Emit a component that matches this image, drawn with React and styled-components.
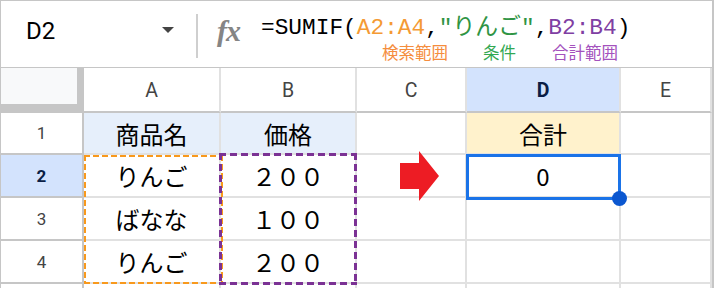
import React from "react";
import styled, { createGlobalStyle, css } from "styled-components";

const Global = createGlobalStyle`
  html, body { margin: 0; padding: 0; background: #ffffff; }
  body { font-family: Roboto, "Noto Sans CJK JP", sans-serif; }
  * { box-sizing: border-box; }
`;

const COLORS = {
  orange: "#f49a34",
  green: "#2f9444",
  purple: "#7f3fa3",
  labelOrange: "#f58d3d",
  labelGreen: "#33a852",
  labelPurple: "#a452bd",
  line: "#e1e1e1",
  headLine: "#c6c6c6",
};

const Frame = styled.div`
  width: 714px;
  border-top: 1px solid ${COLORS.headLine};
  border-left: 1px solid ${COLORS.headLine};
  border-right: 2px solid ${COLORS.headLine};
  overflow: hidden;
  height: 288px;
`;

const FormulaBar = styled.div`
  height: 67px;
  border-bottom: 1px solid ${COLORS.headLine};
  display: flex;
  align-items: flex-start;
`;

const NameBox = styled.div`
  width: 195px;
  height: 66px;
  display: flex;
  align-items: center;
  padding: 0 0 6px 25px;
`;

const NameText = styled.span`
  font-family: Roboto, sans-serif;
  font-size: 24px;
  color: #000;
  flex: 1;
`;

const Caret = styled.span`
  width: 0;
  height: 0;
  border-left: 6.5px solid transparent;
  border-right: 6.5px solid transparent;
  border-top: 6px solid #444;
  margin-right: 22px;
  margin-top: -2px;
`;

const Divider = styled.div`
  width: 2px;
  height: 44px;
  margin-top: 13px;
  background: #cfcfcf;
`;

const FxIcon = styled.span`
  font-family: "Liberation Serif", serif;
  font-style: italic;
  font-weight: bold;
  font-size: 30px;
  color: #858585;
  margin: 13px 0 0 19px;
  width: 44px;
  letter-spacing: -1px;
`;

const FormulaArea = styled.div`
  display: flex;
  flex-direction: column;
  padding-top: 11px;
`;

const FormulaLine = styled.div`
  font-family: "Liberation Mono", "Noto Sans CJK JP", monospace;
  font-size: 22.8px;
  line-height: 32px;
  color: #000;
  white-space: pre;
`;

const Tok = styled.span`
  color: ${(p) => p.$color || "#000"};
`;

const Labels = styled.div`
  display: flex;
  padding-left: 121px;
  margin-top: -2px;
`;

const Label = styled.span`
  font-family: "Noto Sans CJK JP", sans-serif;
  font-size: 16.5px;
  line-height: 20px;
  color: ${(p) => p.$color};
  margin-right: ${(p) => p.$gap || 0}px;
`;

const Grid = styled.div`
  display: grid;
  grid-template-columns: 83px 137px 136px 110px 154px 91px;
  grid-template-rows: 45px 42px 43px 43px 43px 30px;
`;

const Cell = styled.div`
  border-right: 2px solid ${COLORS.line};
  border-bottom: 2px solid ${COLORS.line};
  display: flex;
  align-items: center;
  justify-content: center;
  font-family: "Noto Sans CJK JP", sans-serif;
  font-size: 24px;
  color: #000;
  background: ${(p) => p.$bg || "#fff"};
  grid-row: ${(p) => p.$row};
  grid-column: ${(p) => p.$col};
`;

const Corner = styled.div`
  grid-row: 1;
  grid-column: 1;
  background: #f8f9fa;
  border-right: 7px solid ${COLORS.headLine};
  border-bottom: 9px solid ${COLORS.headLine};
`;

const ColHead = styled(Cell)`
  font-family: Roboto, sans-serif;
  font-size: 19.5px;
  color: ${(p) => (p.$active ? "#0b1e45" : "#444")};
  font-weight: ${(p) => (p.$active ? 700 : 400)};
  background: ${(p) => (p.$active ? "#d3e3fd" : "#fff")};
  border-bottom: 2px solid ${COLORS.headLine};
  border-right-color: ${COLORS.line};
  padding-top: 2px;
`;

const RowHead = styled(Cell)`
  font-family: Roboto, sans-serif;
  font-size: 17px;
  color: ${(p) => (p.$active ? "#0b1e45" : "#444")};
  font-weight: ${(p) => (p.$active ? 700 : 400)};
  background: ${(p) => (p.$active ? "#d3e3fd" : "#fff")};
  border-right-color: ${COLORS.headLine};
  border-bottom-color: ${COLORS.headLine};
`;

const dashes = (color, w, dash, gap) => css`
  background:
    repeating-linear-gradient(90deg, ${color} 0 ${dash}px, transparent ${dash}px ${dash + gap}px) left top / 100% ${w}px no-repeat,
    repeating-linear-gradient(90deg, ${color} 0 ${dash}px, transparent ${dash}px ${dash + gap}px) left bottom / 100% ${w}px no-repeat,
    repeating-linear-gradient(180deg, ${color} 0 ${dash}px, transparent ${dash}px ${dash + gap}px) left top / ${w}px 100% no-repeat,
    repeating-linear-gradient(180deg, ${color} 0 ${dash}px, transparent ${dash}px ${dash + gap}px) right top / ${w}px 100% no-repeat;
`;

const RangeOutline = styled.div`
  grid-row: 3 / span 3;
  grid-column: ${(p) => p.$col};
  pointer-events: none;
  z-index: 2;
  ${(p) => dashes(p.$color, p.$w, p.$dash, p.$gap)}
  margin: ${(p) => p.$margin};
`;

const Selection = styled.div`
  grid-row: 3;
  grid-column: 5;
  border: 3px solid #1a73e8;
  margin: -1px 0 -2px -1px;
  position: relative;
  z-index: 3;
  pointer-events: none;
`;

const Handle = styled.span`
  position: absolute;
  right: -9px;
  bottom: -9px;
  width: 15px;
  height: 15px;
  border-radius: 50%;
  background: #0b57d0;
`;

const ArrowCell = styled(Cell)`
  padding-left: 17px;
  overflow: visible;
  z-index: 1;
`;

const Arrow = styled.svg`
  flex: none;
  margin-top: 1px;
`;

export default function App() {
  const cols = ["A", "B", "C", "D", "E"];
  const data = [
    ["商品名", "価格", "", "合計", ""],
    ["りんご", "２００", "", "0", ""],
    ["ばなな", "１００", "", "", ""],
    ["りんご", "２００", "", "", ""],
    ["", "", "", "", ""],
  ];
  const bg = (r, c) => {
    if (r === 0 && (c === 0 || c === 1)) return "#e6effb";
    if (r === 0 && c === 3) return "#fff2cc";
    return "#fff";
  };
  return (
    <>
      <Global />
      <Frame>
        <FormulaBar>
          <NameBox>
            <NameText>D2</NameText>
            <Caret />
          </NameBox>
          <Divider />
          <FxIcon>fx</FxIcon>
          <FormulaArea>
            <FormulaLine>
              =SUMIF(<Tok $color={COLORS.orange}>A2:A4</Tok>,
              <Tok $color={COLORS.green}>"りんご"</Tok>,
              <Tok $color={COLORS.purple}>B2:B4</Tok>)
            </FormulaLine>
            <Labels>
              <Label $color={COLORS.labelOrange} $gap={35}>検索範囲</Label>
              <Label $color={COLORS.labelGreen} $gap={36}>条件</Label>
              <Label $color={COLORS.labelPurple}>合計範囲</Label>
            </Labels>
          </FormulaArea>
        </FormulaBar>
        <Grid>
          <Corner />
          {cols.map((c, i) => (
            <ColHead key={c} $row={1} $col={i + 2} $active={c === "D"}>
              {c}
            </ColHead>
          ))}
          {data.map((row, r) => (
            <React.Fragment key={r}>
              <RowHead $row={r + 2} $col={1} $active={r === 1}>
                {r < 4 ? r + 1 : ""}
              </RowHead>
              {row.map((v, c) =>
                r === 1 && c === 2 ? (
                  <ArrowCell key={c} $row={r + 2} $col={c + 2}>
                    <Arrow width="40" height="50" viewBox="0 0 40 50">
                      <polygon points="0,12 19,12 19,0 39,25 19,50 19,38 0,38" fill="#ed1c24" />
                    </Arrow>
                  </ArrowCell>
                ) : (
                  <Cell key={c} $row={r + 2} $col={c + 2} $bg={bg(r, c)}>
                    {v}
                  </Cell>
                )
              )}
            </React.Fragment>
          ))}
          <RangeOutline $col={2} $color="#f8991d" $w={2} $dash={6} $gap={3} $margin="0 -2px 0 0" />
          <RangeOutline $col={3} $color="#7b3294" $w={3} $dash={7} $gap={4} $margin="-2px 0 -1px -2px" />
          <Selection>
            <Handle />
          </Selection>
        </Grid>
      </Frame>
    </>
  );
}
